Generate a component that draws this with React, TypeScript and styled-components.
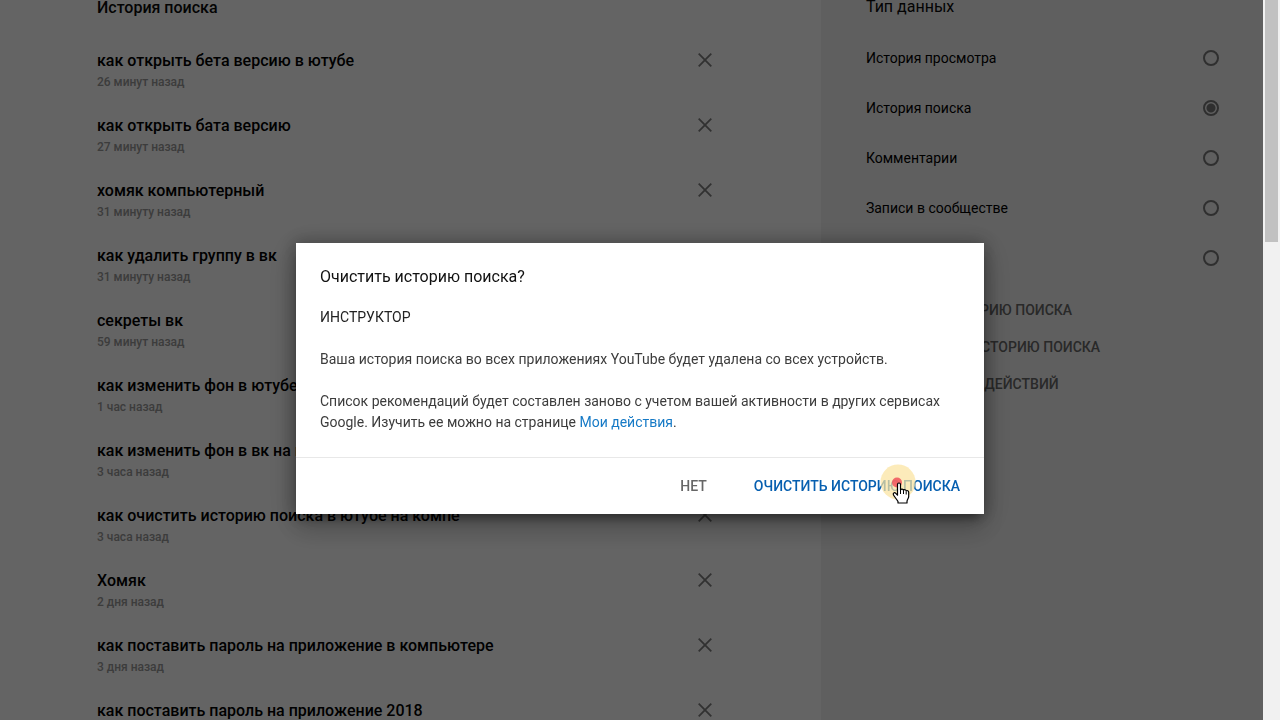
import React, { useState } from "react";
import styled, { createGlobalStyle } from "styled-components";

const GlobalStyle = createGlobalStyle`
  *, *::before, *::after { box-sizing: border-box; }
  html, body { margin: 0; padding: 0; }
  body {
    background: #fafafa;
    color: #0a0a0a;
    font-family: Roboto, "Liberation Sans", sans-serif;
    overflow: hidden;
  }
  button, input { font: inherit; margin: 0; }
`;

const Page = styled.div`
  display: flex;
  height: 100vh;
  overflow: hidden;
`;

const Content = styled.div`
  display: flex;
  flex: 1;
  min-width: 0;
`;

const Main = styled.main`
  flex: 0 0 65%;
  min-width: 0;
  padding: 0 106px 0 97px;
`;

const Heading = styled.h1`
  margin: 0 0 34px;
  font-size: 16px;
  line-height: 16px;
  font-weight: 500;
`;

const HistoryList = styled.ul`
  margin: 0;
  padding: 0;
  list-style: none;
`;

const HistoryRow = styled.li`
  display: flex;
  align-items: flex-start;
  justify-content: space-between;
  height: 65px;
`;

const Query = styled.div`
  font-size: 16px;
  line-height: 22px;
  font-weight: 500;
  color: #000;
`;

const Meta = styled.div`
  margin-top: 1px;
  font-size: 12px;
  line-height: 18px;
  font-weight: 500;
  color: #969696;
`;

const IconButton = styled.button`
  display: flex;
  padding: 0;
  border: 0;
  background: none;
  color: #7c7c7c;
  cursor: pointer;
`;

const Sidebar = styled.aside`
  flex: 1;
  min-width: 0;
  padding: 0 44px 0 45px;
  background: #eeeeee;
`;

const DataTypes = styled.fieldset`
  margin: 0;
  padding: 0;
  border: 0;
`;

const Legend = styled.legend`
  padding: 0 0 19px;
  font-size: 16px;
  line-height: 14px;
`;

const Option = styled.label`
  display: flex;
  align-items: center;
  justify-content: space-between;
  height: 50px;
  font-size: 14px;
  color: #000;
`;

const Radio = styled.input`
  appearance: none;
  width: 16px;
  height: 16px;
  border: 2px solid #767676;
  border-radius: 50%;
  &:checked {
    background: radial-gradient(circle, #767676 4px, transparent 5px);
  }
`;

const Actions = styled.div`
  display: flex;
  flex-direction: column;
  align-items: flex-start;
  padding-top: 8px;
`;

const TextButton = styled.button<{ $tone?: "primary" | "muted" }>`
  position: relative;
  height: 37px;
  padding: 0;
  border: 0;
  background: none;
  font-size: 14px;
  font-weight: 500;
  text-transform: uppercase;
  white-space: nowrap;
  color: ${(p) => (p.$tone === "primary" ? "#065fb0" : "#666")};
  cursor: pointer;
`;

const ScrollTrack = styled.div`
  position: relative;
  z-index: 3;
  flex: 0 0 17px;
  padding: 0 2px;
  background: #f1f1f1;
`;

const ScrollThumb = styled.div`
  height: 242px;
  background: #c1c1c1;
`;

const Scrim = styled.div`
  position: fixed;
  inset: 0;
  z-index: 2;
  display: flex;
  align-items: center;
  justify-content: center;
  padding: 37px 24px 0;
  background: rgba(0, 0, 0, 0.6);
`;

const Dialog = styled.section`
  width: 100%;
  max-width: 688px;
  background: #fff;
  box-shadow: 0 16px 24px 2px rgba(0, 0, 0, 0.14), 0 6px 30px 5px rgba(0, 0, 0, 0.12),
    0 8px 10px -5px rgba(0, 0, 0, 0.4), 0 0 16px 2px rgba(0, 0, 0, 0.25);
`;

const DialogBody = styled.div`
  padding: 24px;
  font-size: 14px;
  line-height: 21px;
  color: #3c3c3c;
`;

const DialogTitle = styled.h2`
  margin: 0 0 20px;
  font-size: 16px;
  line-height: 20px;
  font-weight: 400;
  color: #111;
`;

const Paragraph = styled.p`
  margin: 0 0 21px;
  &:last-child { margin-bottom: 0; }
`;

const Account = styled(Paragraph)`
  color: #222;
`;

const Link = styled.a`
  color: #167ac6;
  text-decoration: none;
`;

const DialogFooter = styled.footer`
  display: flex;
  justify-content: flex-end;
  gap: 47px;
  padding: 9px 24px 10px;
  border-top: 1px solid #e8e8e8;
`;

const Pointer = styled.svg`
  position: absolute;
  left: 126px;
  top: -3px;
  pointer-events: none;
`;

const searches = [
  ["как открыть бета версию в ютубе", "26 минут назад"],
  ["как открыть бата версию", "27 минут назад"],
  ["хомяк компьютерный", "31 минуту назад"],
  ["как удалить группу в вк", "31 минуту назад"],
  ["секреты вк", "59 минут назад"],
  ["как изменить фон в ютубе", "1 час назад"],
  ["как изменить фон в вк на компе", "3 часа назад"],
  ["как очистить историю поиска в ютубе на компе", "3 часа назад"],
  ["Хомяк", "2 дня назад"],
  ["как поставить пароль на приложение в компьютере", "3 дня назад"],
  ["как поставить пароль на приложение 2018", "3 дня назад"],
];

const dataTypes = ["История просмотра", "История поиска", "Комментарии", "Записи в сообществе", "Чат"];

const CloseIcon = () => (
  <svg width="20" height="20" viewBox="0 0 20 20" aria-hidden="true">
    <path d="M3.700 3.700l12.600 12.600M16.300 3.700l-12.600 12.600" stroke="currentColor" strokeWidth="1.800" fill="none" />
  </svg>
);

const ClickPointer = () => (
  <Pointer width="36" height="42" viewBox="0 0 36 42" aria-hidden="true">
    <circle cx="18" cy="18" r="17.500" fill="#fbe3a0" fillOpacity="0.720" />
    <circle cx="17" cy="18.500" r="5" fill="#f0525a" fillOpacity="0.850" />
    <path
      d="M17.500 20.500c0-2 3-2 3 0v5.500c.5-1.200 2.700-1.200 3 .3.600-1 2.500-.7 2.700.7.800-.8 2.500-.3 2.500 1.200v4.300c0 2-1.700 3-1.700 5v1.500h-9v-1.500c-1-2-3.500-4.500-4.500-6.500-1-2 1-3 2.300-1.700l1.700 1.900z"
      fill="#fff"
      stroke="#000"
      strokeWidth="1.200"
      strokeLinejoin="round"
    />
    <path d="M20.500 26v4M23.500 26.500v3.500M26.200 27.500v3" stroke="#000" strokeWidth="1" fill="none" />
  </Pointer>
);

export default function App() {
  const [selected, setSelected] = useState("История поиска");

  return (
    <>
      <GlobalStyle />
      <Page>
        <Content>
          <Main>
            <Heading>История поиска</Heading>
            <HistoryList>
              {searches.map(([query, when]) => (
                <HistoryRow key={query}>
                  <div>
                    <Query>{query}</Query>
                    <Meta>{when}</Meta>
                  </div>
                  <IconButton aria-label="Удалить">
                    <CloseIcon />
                  </IconButton>
                </HistoryRow>
              ))}
            </HistoryList>
          </Main>
          <Sidebar>
            <DataTypes>
              <Legend>Тип данных</Legend>
              {dataTypes.map((name) => (
                <Option key={name}>
                  {name}
                  <Radio
                    type="radio"
                    name="data-type"
                    checked={selected === name}
                    onChange={() => setSelected(name)}
                  />
                </Option>
              ))}
            </DataTypes>
            <Actions>
              <TextButton>Очистить историю поиска</TextButton>
              <TextButton>Не сохранять историю поиска</TextButton>
              <TextButton>Просмотр всех действий</TextButton>
            </Actions>
          </Sidebar>
        </Content>
        <ScrollTrack>
          <ScrollThumb />
        </ScrollTrack>
      </Page>
      <Scrim>
        <Dialog role="dialog" aria-modal="true" aria-labelledby="dialog-title">
          <DialogBody>
            <DialogTitle id="dialog-title">Очистить историю поиска?</DialogTitle>
            <Account>ИНСТРУКТОР</Account>
            <Paragraph>
              Ваша история поиска во всех приложениях YouTube будет удалена со всех устройств.
            </Paragraph>
            <Paragraph>
              Список рекомендаций будет составлен заново с учетом вашей активности в других сервисах
              Google. Изучить ее можно на странице <Link href="#activity">Мои действия</Link>.
            </Paragraph>
          </DialogBody>
          <DialogFooter>
            <TextButton>Нет</TextButton>
            <TextButton $tone="primary">
              Очистить историю поиска
              <ClickPointer />
            </TextButton>
          </DialogFooter>
        </Dialog>
      </Scrim>
    </>
  );
}
